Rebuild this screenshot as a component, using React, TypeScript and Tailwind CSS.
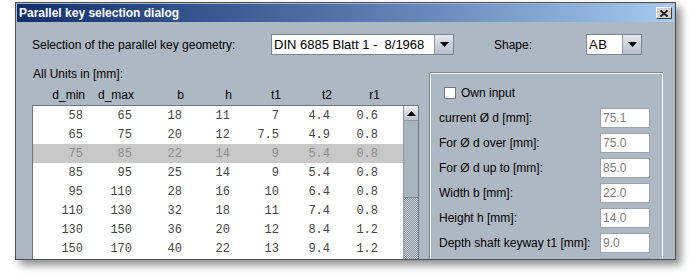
import React from 'react';

const rows = [
  ['58', '65', '18', '11', '7', '4.4', '0.6'],
  ['65', '75', '20', '12', '7.5', '4.9', '0.8'],
  ['75', '85', '22', '14', '9', '5.4', '0.8'],
  ['85', '95', '25', '14', '9', '5.4', '0.8'],
  ['95', '110', '28', '16', '10', '6.4', '0.8'],
  ['110', '130', '32', '18', '11', '7.4', '0.8'],
  ['130', '150', '36', '20', '12', '8.4', '1.2'],
  ['150', '170', '40', '22', '13', '9.4', '1.2'],
];

const headers = ['d_min', 'd_max', 'b', 'h', 't1', 't2', 'r1'];
const colW = ['w-[50px]', 'w-[49px]', 'w-[50px]', 'w-[48px]', 'w-[49px]', 'w-[51px]', 'w-[48px]'];

const fields = [
  ['current Ø d [mm]:', '75.1'],
  ['For Ø d over [mm]:', '75.0'],
  ['For Ø d up to [mm]:', '85.0'],
  ['Width b [mm]:', '22.0'],
  ['Height h [mm]:', '14.0'],
  ['Depth shaft keyway t1  [mm]:', '9.0'],
  ['', ''],
];

function Arrow({ up }: { up?: boolean }) {
  return (
    <svg width="9" height="5" viewBox="0 0 9 5">
      <polygon points={up ? '0,5 9,5 4.5,0' : '0,0 9,0 4.5,5'} fill="#000" />
    </svg>
  );
}

function Combo({ text, width, mono }: { text: string; width: string; mono?: boolean }) {
  return (
    <div className={`flex h-[21px] border border-[#7b858f] bg-white ${width}`}>
      <div className={`flex-1 whitespace-pre pl-[2px] text-[13px] leading-[19px] text-black ${mono ? 'tracking-[0.5px]' : ''}`}>
        {text}
      </div>
      <div className="flex w-[19px] items-center justify-center border-l border-[#8e98a2] bg-gradient-to-b from-[#e4e9ee] to-[#b4bec8]">
        <Arrow />
      </div>
    </div>
  );
}

export default function App() {
  return (
    <div className="h-[275px] w-[691px] bg-white pl-[15px] pt-[2px]" style={{ fontFamily: '"Liberation Sans", Arial, sans-serif' }}>
      <div className="flex h-[258px] w-[661px] flex-col overflow-hidden border border-[#4a4f55] bg-[#aeb8c2] shadow-[5px_5px_8px_rgba(0,0,0,0.45)]">
        {/* title bar */}
        <div className="mx-[1px] mt-[1px] flex h-[18px] items-center justify-between bg-gradient-to-r from-[#13306e] via-[#5574aa] to-[#a6caf0] pl-[2px] pr-[2px]">
          <span className="text-[12px] font-bold text-white">Parallel key selection dialog</span>
          <div className="flex h-[12px] w-[16px] items-center justify-center border border-b-[#404040] border-l-white border-r-[#404040] border-t-white bg-[#d4d0c8]">
            <svg width="8" height="7" viewBox="0 0 8 7">
              <path d="M0.5 0.5 L7.5 6.5 M7.5 0.5 L0.5 6.5" stroke="#000" strokeWidth="1.6" />
            </svg>
          </div>
        </div>
        <div className="h-[1px] bg-[#d0d6dc]" />

        {/* content */}
        <div className="flex flex-col pl-[16px] pt-[12px]">
          <div className="flex h-[21px] items-center text-[12px] text-black">
            <span className="w-[239px]">Selection of the parallel key geometry:</span>
            <Combo text="DIN 6885 Blatt 1 -  8/1968" width="w-[183px]" />
            <span className="ml-[40px] w-[92px]">Shape:</span>
            <Combo text="AB" width="w-[56px]" mono />
          </div>

          <div className="mt-[12px] flex">
            {/* left column */}
            <div className="flex w-[387px] flex-col">
              <div className="pl-[1px] text-[12px] leading-[14px] text-black">All Units in [mm]:</div>
              <div className="mt-[7px] flex pl-[3px] text-[12px] leading-[14px] text-black">
                {headers.map((h, i) => (
                  <div key={h} className={`${colW[i]} text-right`}>{h}</div>
                ))}
              </div>
              <div className="mt-[3px] flex h-[160px] border border-[#6c7680]">
                <div className="flex-1 bg-white" style={{ fontFamily: '"Liberation Mono", "Courier New", monospace' }}>
                  {rows.map((r, ri) => (
                    <div key={ri} className={`flex h-[19px] items-center text-[12px] ${ri === 2 ? 'bg-[#c8c8c8] text-[#8a8a8a]' : 'text-[#444]'}`}>
                      {r.map((c, ci) => (
                        <div key={ci} className={`${colW[ci]} text-right`}>{c}</div>
                      ))}
                    </div>
                  ))}
                </div>
                <div className="flex w-[15px] flex-col border-l border-[#8e98a2] bg-[#aab4be]">
                  <div className="flex h-[15px] items-center justify-center border-b border-[#8e98a2] bg-gradient-to-b from-[#eef1f4] to-[#b8c2cc]">
                    <Arrow up />
                  </div>
                  <div className="h-[76px]" />
                  <div className="flex-1 border-t border-[#7c868f] bg-[repeating-conic-gradient(#8a949e_0_25%,#c9d0d7_0_50%)] bg-[length:2px_2px]" />
                </div>
              </div>
            </div>

            {/* right panel */}
            <div className="ml-[10px] mt-[5px] h-[200px] w-[234px] border-l border-t border-[#7f8993] shadow-[inset_1px_1px_0_#f4f6f8,inset_-1px_0_0_#f4f6f8]">
              <div className="flex items-center pl-[14px] pt-[11px] text-[12px] text-black">
                <div className="h-[12px] w-[12px] border border-[#6c7680] bg-white" />
                <span className="ml-[5px]">Own input</span>
              </div>
              <div className="mt-[6px] flex flex-col gap-[5px] pl-[9px]">
                {fields.map(([l, v], i) => (
                  <div key={i} className="flex h-[20px] items-center text-[12px]">
                    <span className="w-[161px] text-black">{l}</span>
                    <div className="h-[20px] w-[50px] border border-[#9aa4ae] bg-white pl-[2px] leading-[18px] text-[#7d7d7d]">{v}</div>
                  </div>
                ))}
              </div>
            </div>
          </div>
        </div>
      </div>
    </div>
  );
}
